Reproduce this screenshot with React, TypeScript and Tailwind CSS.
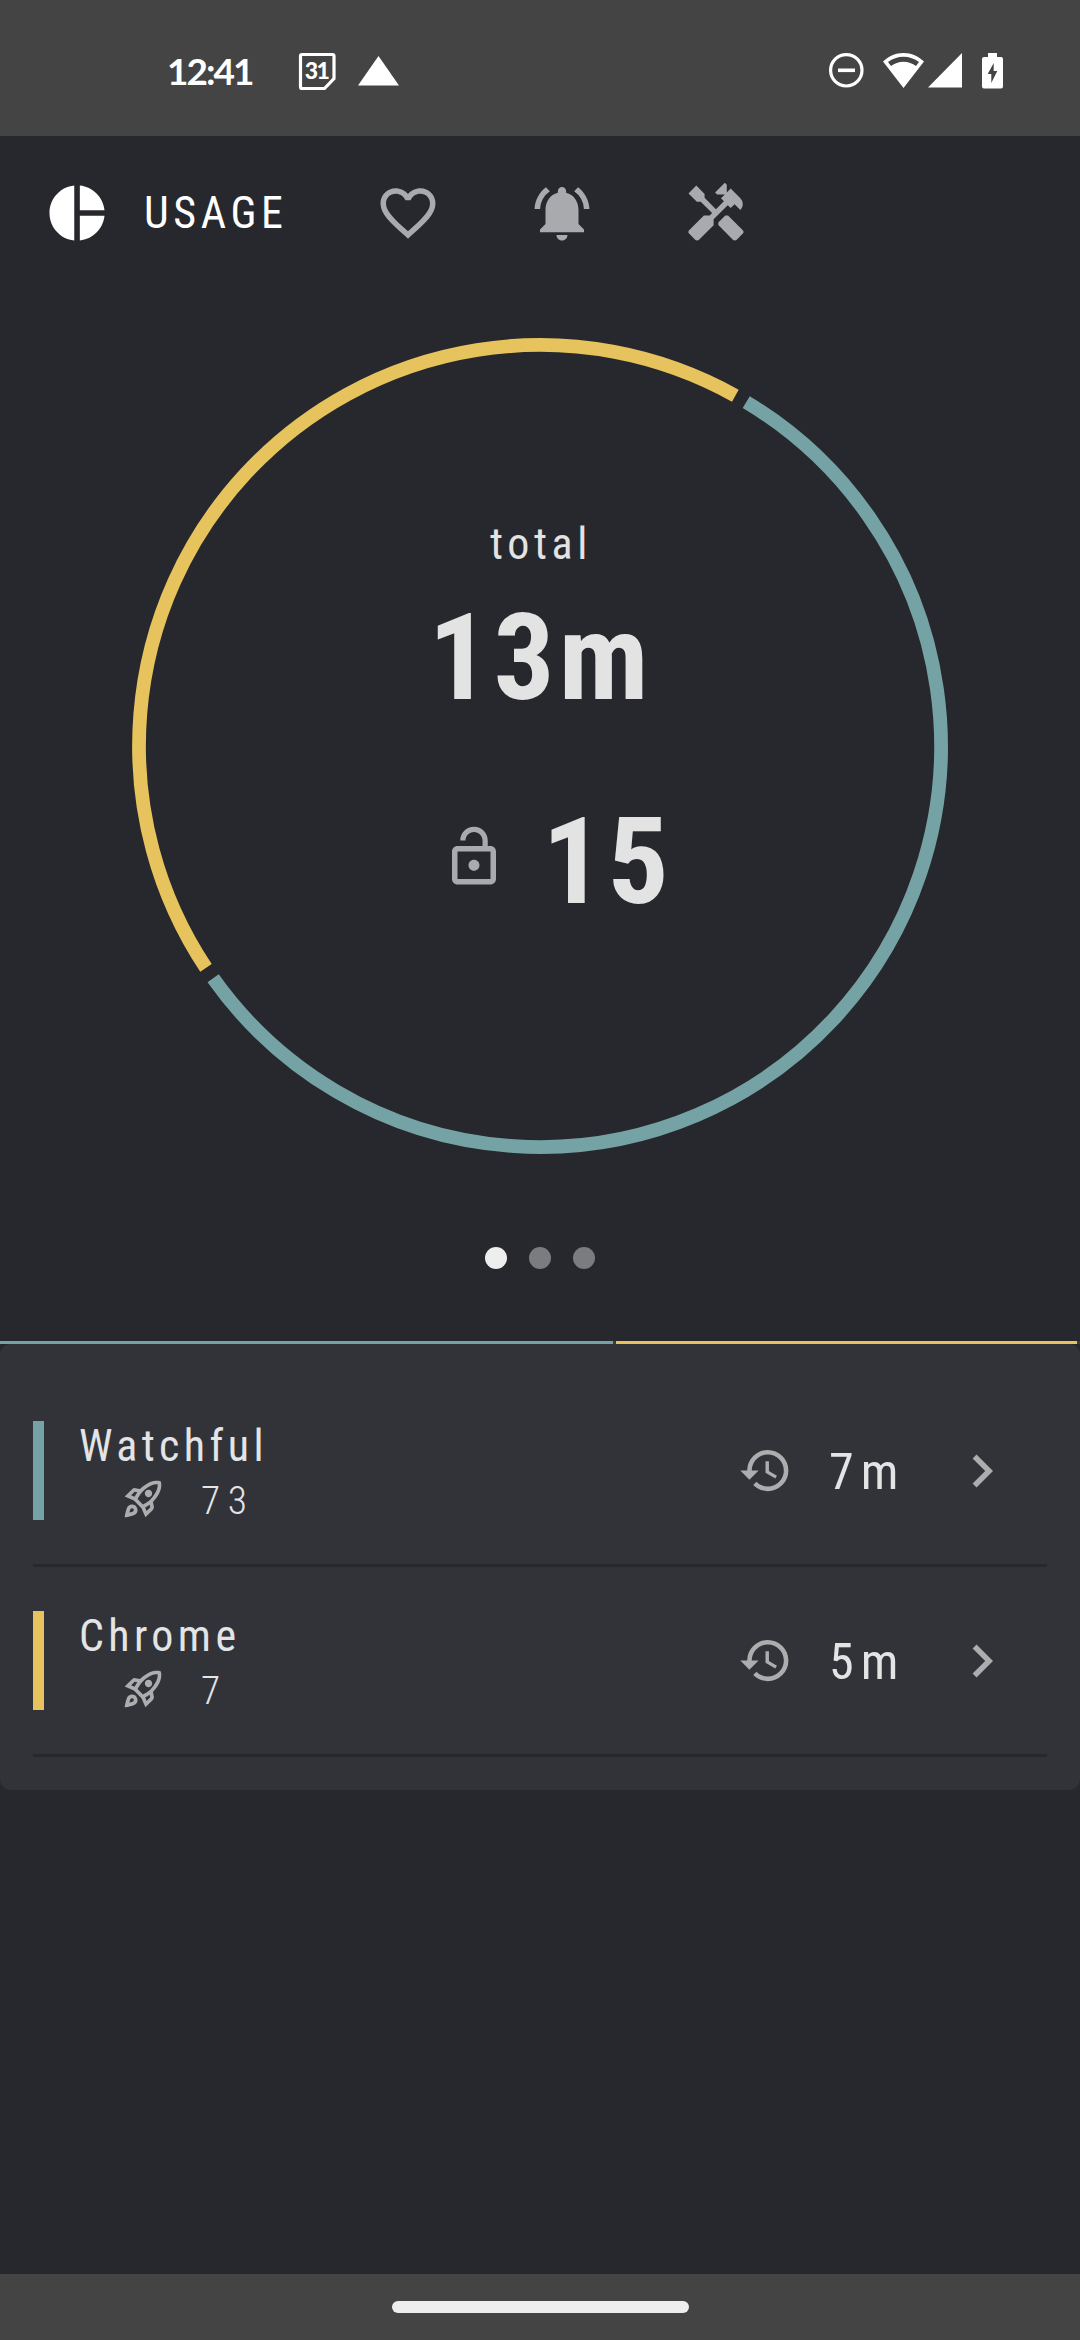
import React from 'react';
import {
  MdPieChart,
  MdFavoriteBorder,
  MdNotificationsActive,
  MdHandyman,
  MdLockOpen,
  MdHistory,
  MdChevronRight,
  MdOutlineRocketLaunch,
} from 'react-icons/md';

const TEAL = '#75a3a5';
const AMBER = '#e6c35c';

function polar(deg: number, r: number) {
  const a = (deg * Math.PI) / 180;
  return `${(408 + r * Math.sin(a)).toFixed(2)} ${(408 - r * Math.cos(a)).toFixed(2)}`;
}

function arc(from: number, to: number) {
  const r = 401;
  return `M${polar(from, r)}A${r} ${r} 0 ${to - from > 180 ? 1 : 0} 1 ${polar(to, r)}`;
}

function StatusBar() {
  return (
    <header className="flex h-[136px] items-start bg-[#444444] text-white">
      <div className="ml-[167px] mt-[50px] w-[88px] whitespace-nowrap font-['Lato'] text-[37px] font-bold leading-[42px] tracking-[-2px]">
        12:41
      </div>
      <svg className="ml-[43px] mt-[52px] h-[39px] w-[39px]" viewBox="0 0 39 39" fill="none">
        <path d="M4 2.5H34.5Q36 2.5 36 4V26.5L26.5 36.5H4Q2.500 36.500 2.500 35V4Q2.500 2.500 4 2.500Z" stroke="#fff" strokeWidth="3.2" />
        <text x="18.500" y="27" textAnchor="middle" fontFamily="Lato" fontWeight="900" fontSize="23" letterSpacing="-1.500" fill="#fff">31</text>
      </svg>
      <svg className="ml-[21px] mt-[56px] h-[30px] w-[41px]" viewBox="0 0 41 30">
        <path d="M20.5 0L41 29.5H0Z" fill="#fff" />
      </svg>
      <svg className="ml-[430px] mt-[53px] h-[35px] w-[35px]" viewBox="0 0 35 35" fill="none" stroke="#fff">
        <circle cx="17.3" cy="17.3" r="15.7" strokeWidth="3.2" />
        <path d="M9 17.3H26" strokeWidth="3.6" />
      </svg>
      <svg className="ml-[19px] mt-[53px] h-[36px] w-[41px]" viewBox="0 0 41 36">
        <path d="M20.5 0C12.5 0 5.500 3.300 0 8.500L20.500 35L41 8.500C35.500 3.300 28.500 0 20.500 0ZM20.500 3.700C26.300 3.700 31.500 5.700 36 9L33 13C29.500 10.300 25.200 8.700 20.500 8.700C15.800 8.700 11.500 10.300 8 13L5 9C9.500 5.700 14.700 3.700 20.500 3.700Z" fill="#fff" fillRule="evenodd" />
      </svg>
      <svg className="ml-[4px] mt-[53px] h-[35px] w-[35px]" viewBox="0 0 35 35">
        <path d="M34 0V34.500H0Z" fill="#fff" />
      </svg>
      <svg className="ml-[19px] mt-[53px] h-[36px] w-[21px]" viewBox="0 0 21 36">
        <path d="M6 0H15V4H19Q21 4 21 6V33.500Q21 35.500 19 35.500H2Q0 35.500 0 33.500V6Q0 4 2 4H6ZM11.700 10L5.700 21H9.300V30L15.300 18H11.700Z" fill="#fff" fillRule="evenodd" />
      </svg>
    </header>
  );
}

function Tabs() {
  return (
    <nav className="flex h-[154px] items-center pl-[44px] text-[#a9aaae]">
      <MdPieChart className="h-[66px] w-[66px] text-white" />
      <span className="mb-[1px] ml-[34px] w-[142px] whitespace-nowrap text-[44px] leading-[52px] tracking-[4.6px] text-white">USAGE</span>
      <MdFavoriteBorder className="ml-[89px] h-[66px] w-[66px]" />
      <MdNotificationsActive className="ml-[88px] h-[66px] w-[66px]" />
      <MdHandyman className="ml-[88px] h-[66px] w-[66px]" />
    </nav>
  );
}

function UsageRing() {
  return (
    <section className="relative mx-auto mt-[48px] h-[816px] w-[816px] shrink-0">
      <svg className="absolute inset-0 h-[816px] w-[816px]" viewBox="0 0 816 816" fill="none" strokeWidth="13.75">
        <path d={arc(30.95, 234.6)} stroke={TEAL} />
        <path d={arc(236.4, 389.15)} stroke={AMBER} />
      </svg>
      <div className="relative flex flex-col items-center pt-[180px] text-[#e3e3e3]">
        <div className="h-[52px] pl-[2px] text-[44px] leading-[52px] tracking-[4.6px]">total</div>
        <div className="mt-[17px] h-[142px] pl-[1px] text-[121px] font-bold leading-[142px] tracking-[4px]">13m</div>
        <div className="mt-[62px] flex h-[142px] items-center pl-[34px]">
          <MdLockOpen className="mb-[11px] h-[66px] w-[66px] text-[#a9aaae]" />
          <span className="ml-[35px] text-[121px] font-bold leading-[142px] tracking-[4px]">15</span>
        </div>
      </div>
    </section>
  );
}

type AppUsage = { name: string; launches: string; time: string; bar: string };

const apps: AppUsage[] = [
  { name: 'Watchful', launches: '73', time: '7m', bar: 'bg-[#75a3a5]' },
  { name: 'Chrome', launches: '7', time: '5m', bar: 'bg-[#e6c35c]' },
];

function AppRow({ name, launches, time, bar }: AppUsage) {
  return (
    <li className="flex h-[190px] items-center border-b-[3px] border-[#27282d]">
      <div className={`h-[99px] w-[11px] ${bar}`} />
      <div className="ml-[35px] w-[300px] pt-[4px]">
        <div className="h-[52px] whitespace-nowrap text-[44px] leading-[52px] tracking-[4.4px] text-[#e3e4e5]">{name}</div>
        <div className="mt-[1px] flex h-[52px] items-center">
          <MdOutlineRocketLaunch className="ml-[42px] h-[44px] w-[44px] text-[#adadaf]" />
          <span className="ml-[36px] mt-[4px] text-[39.500px] font-light leading-[52px] tracking-[7.500px] text-[#e3e4e5]">{launches}</span>
        </div>
      </div>
      <MdHistory className="ml-[359px] h-[55px] w-[55px] text-[#adadaf]" />
      <span className="ml-[36px] mt-[3px] w-[100px] text-[50px] leading-[60px] tracking-[7px] text-[#e3e4e5]">{time}</span>
      <MdChevronRight className="ml-[19.500px] h-[66px] w-[66px] text-[#adadaf]" />
    </li>
  );
}

export default function App() {
  return (
    <main className="flex h-[2340px] w-[1080px] flex-col overflow-hidden bg-[#27282d] font-['Roboto_Condensed','Roboto',sans-serif] [font-stretch:75%]">
      <StatusBar />
      <Tabs />
      <UsageRing />
      <div className="mt-[93px] flex justify-center gap-[22px]">
        <i className="h-[22px] w-[22px] rounded-full bg-[#eeeeee]" />
        <i className="h-[22px] w-[22px] rounded-full bg-[#7b7c7f]" />
        <i className="h-[22px] w-[22px] rounded-full bg-[#7b7c7f]" />
      </div>
      <div className="mt-[72px] flex h-[3px] gap-[3px] bg-[#3a3b3f]">
        <div className="w-[613px] bg-[#75a3a5]" />
        <div className="w-[461px] bg-[#e6c35c]" />
      </div>
      <ul className="h-[446px] rounded-[11px] bg-[#323338] px-[33px] pt-[33px]">
        {apps.map((app) => (
          <AppRow key={app.name} {...app} />
        ))}
      </ul>
      <footer className="mt-auto flex h-[66px] justify-center bg-[#444444] pt-[27px]">
        <div className="h-[12px] w-[297px] rounded-full bg-[#eeeeee]" />
      </footer>
    </main>
  );
}
